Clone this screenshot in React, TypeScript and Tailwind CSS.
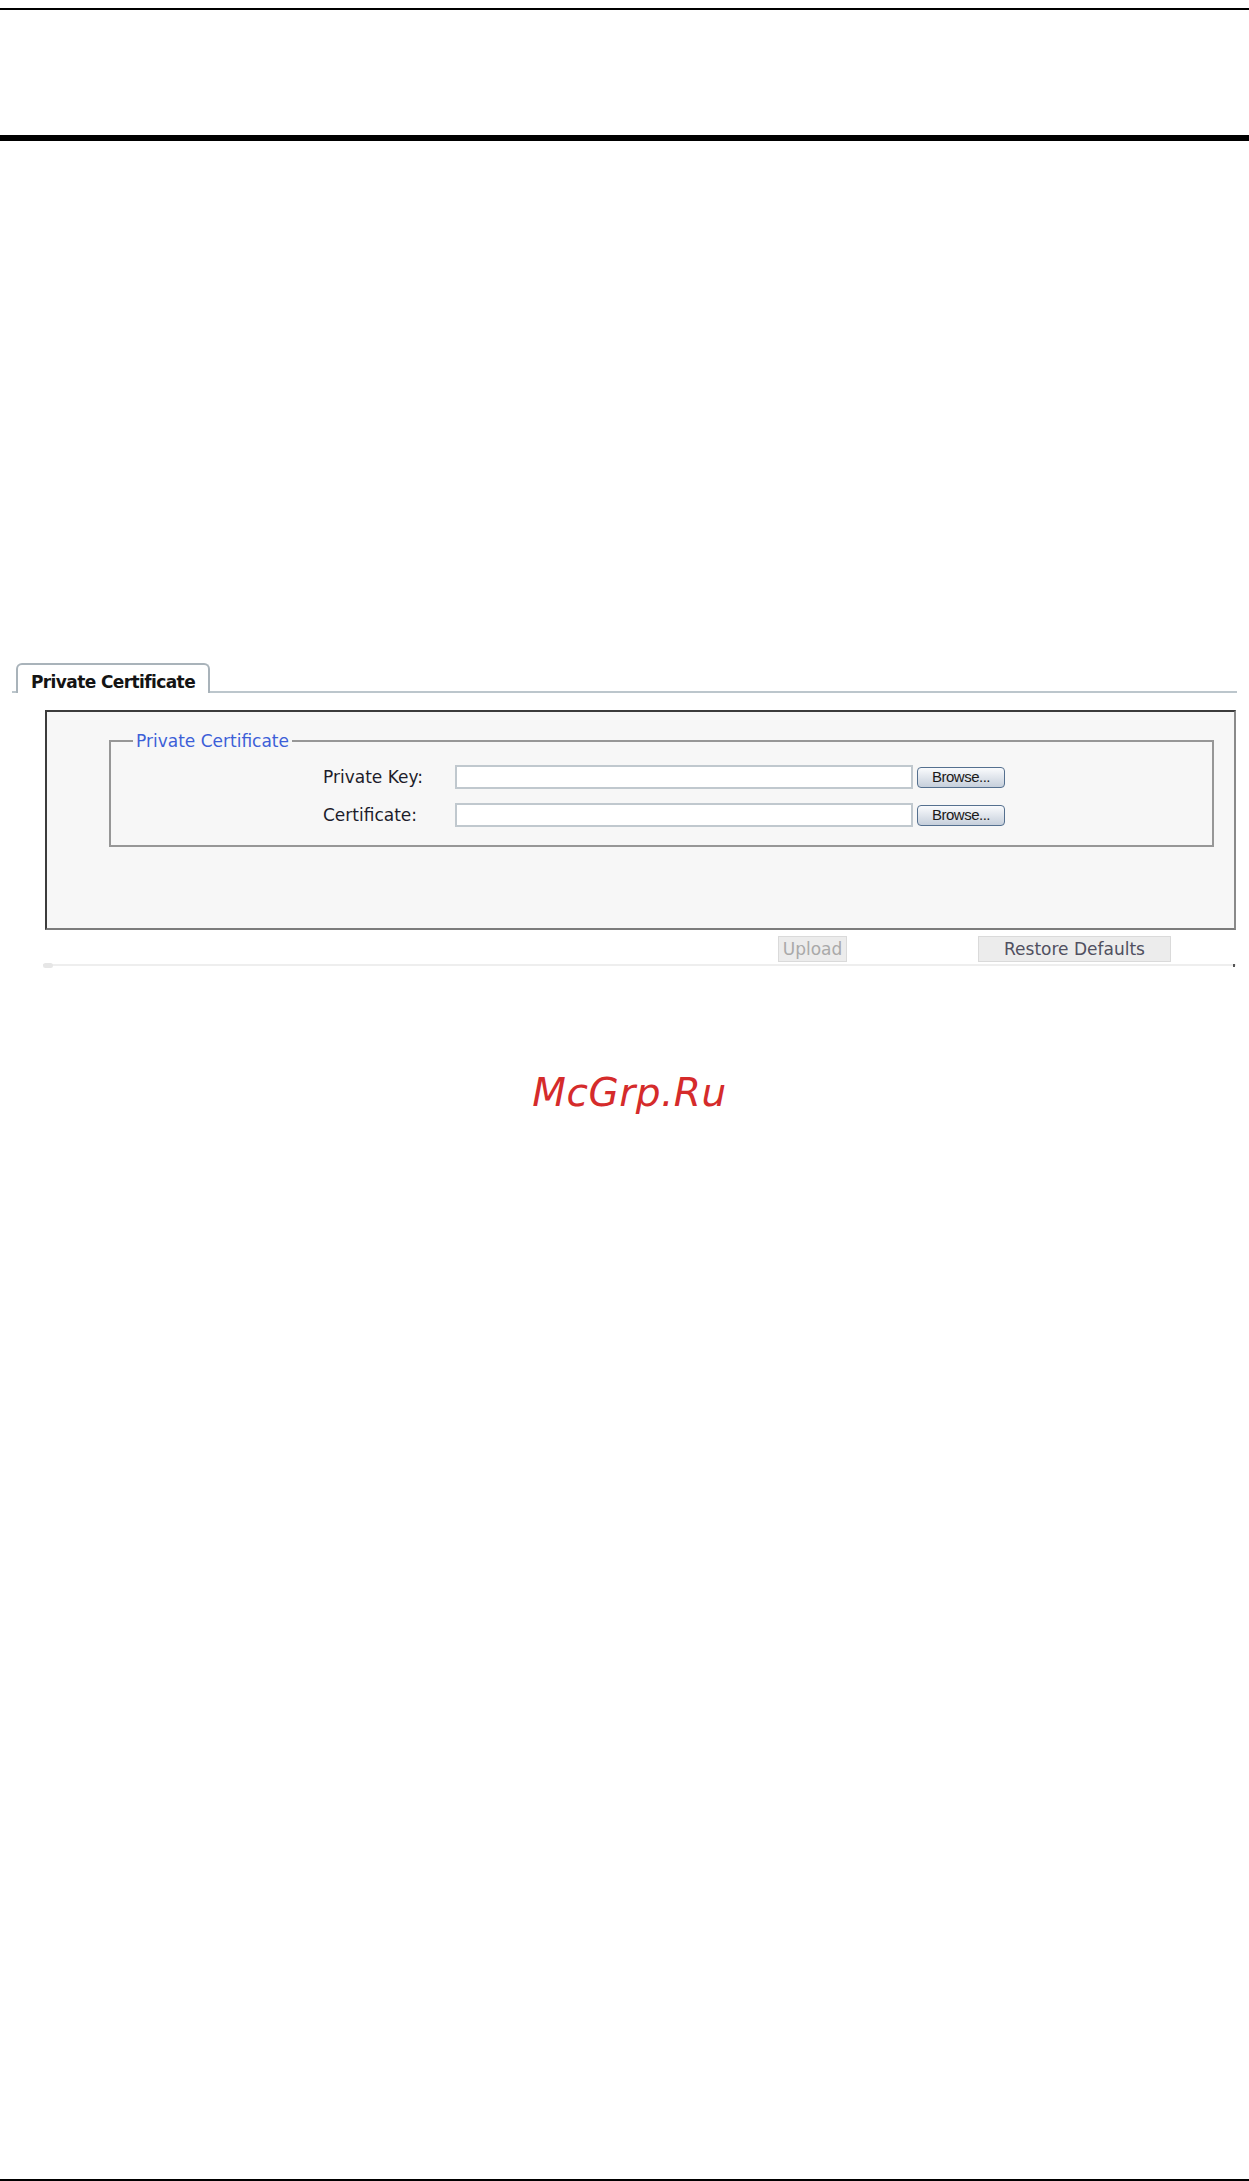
import React from "react";

const sans = "font-['DejaVu_Sans','Verdana',sans-serif]";

type FileRowProps = {
    label: string;
};

function FileRow({ label }: FileRowProps) {
    return (
        <div className="flex items-center h-[24px]">
            <label className="w-[132px] text-[17px] leading-[20px] text-[#1d1d2b]">{label}</label>
            <input
                type="text"
                className="w-[458px] h-[24px] bg-white border-2 border-[#c0c8ce] outline-none"
            />
            <button
                type="button"
                className="ml-[4px] w-[88px] h-[21px] rounded-[4px] border-[1.5px] border-[#55708f] bg-gradient-to-b from-[#fafbfd] to-[#c6cfdb] text-[15px] leading-[18px] tracking-[-0.5px] text-[#1a1a1a] font-['Liberation_Sans',Arial,sans-serif]"
            >
                Browse...
            </button>
        </div>
    );
}

export default function App() {
    return (
        <div className={`relative h-[2181px] w-[1249px] bg-white flex flex-col ${sans}`}>
            {/* page header rules */}
            <div className="mt-[8px] h-[2px] bg-black" />
            <div className="mt-[125px] h-[6px] bg-black" />

            {/* tab strip */}
            <div className="mt-[522px] ml-[12px] w-[1225px] flex border-b-2 border-[#bcc6cc]">
                <div className="relative ml-[4px] -mb-[2px] w-[194px] h-[30px] bg-white border-2 border-b-0 border-[#a9b3ba] rounded-t-[6px] flex items-center justify-center pt-[7px]">
                    <span className="text-[17px] font-bold tracking-[-0.6px] text-[#141414]">Private Certificate</span>
                </div>
            </div>

            {/* settings panel */}
            <div className="mt-[17px] ml-[45px] w-[1191px] bg-[#f7f7f7] border-2 border-t-[#3c3c3c] border-l-[#3c3c3c] border-r-[#8a8a8a] border-b-[#7c7c7c] pt-[19px] pl-[62px] pr-[20px] pb-[81px]">
                <fieldset className="border-2 border-[#979797]">
                    <legend className="ml-[22px] px-[3px] text-[17px] leading-[20px] text-[#3d5fd8]">Private Certificate</legend>
                    <div className="flex flex-col gap-[14px] pt-[14px] pb-[18px] pl-[212px]">
                        <FileRow label="Private Key:" />
                        <FileRow label="Certificate:" />
                    </div>
                </fieldset>
            </div>

            {/* action buttons */}
            <div className="mt-[6px] ml-[43px] w-[1193px]">
                <div className="flex pl-[735px]">
                    <button
                        type="button"
                        disabled
                        className="w-[69px] h-[26px] bg-[#ececec] border border-[#dadada] text-[17px] leading-[20px] text-[#a9a9a9]"
                    >
                        Upload
                    </button>
                    <button
                        type="button"
                        className="ml-[131px] w-[193px] h-[26px] bg-[#ececec] border border-[#dadada] text-[17px] leading-[20px] text-[#505060]"
                    >
                        Restore Defaults
                    </button>
                </div>
                <div className="relative mt-[2px] h-[2px] bg-[#eeeeee]">
                    <span className="absolute left-0 -top-[1px] w-[10px] h-[5px] rounded-[3px] bg-[#e6e6e6]" />
                    <span className="absolute right-[1px] top-0 w-[2px] h-[3px] bg-[#555]" />
                </div>
            </div>

            {/* watermark */}
            <div className="mt-[107px] flex justify-center pl-[10px]">
                <span className="text-[39px] leading-[39px] italic text-[#d52b2b] tracking-[0.5px]">McGrp.Ru</span>
            </div>

            <div className="mt-auto h-[2px] bg-black" />
        </div>
    );
}
